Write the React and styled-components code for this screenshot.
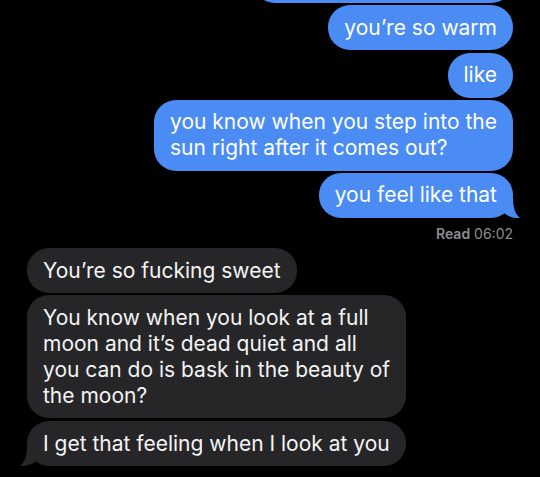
import React from "react";
import styled, { createGlobalStyle } from "styled-components";

const GlobalStyle = createGlobalStyle`
  html, body {
    margin: 0;
    padding: 0;
    background: #000;
  }
  body {
    font-family: Inter, "Liberation Sans", sans-serif;
    overflow: hidden;
  }
`;

const Thread = styled.div`
  width: 540px;
  height: 477px;
  box-sizing: border-box;
  padding: 0 27px;
  display: flex;
  flex-direction: column;
  overflow: hidden;
`;

const Row = styled.div`
  display: flex;
  justify-content: ${(props) => (props.$mine ? "flex-end" : "flex-start")};
  margin-top: ${(props) => props.$gap ?? 2.5}px;
`;

const Bubble = styled.div`
  position: relative;
  box-sizing: border-box;
  padding: 9.5px 16px;
  border-radius: 22px;
  font-size: 21px;
  line-height: 26px;
  white-space: nowrap;
  color: ${(props) => (props.$mine ? "#fff" : "#f4f4f4")};
  background: ${(props) => (props.$mine ? "#4a8cf3" : "#262628")};
`;

// the bubble above, scrolled almost out of view
const Stub = styled.div`
  width: ${(props) => props.$width}px;
  height: 45px;
  border-radius: 22px;
  background: #4a8cf3;
`;

const Tail = styled.svg`
  position: absolute;
  bottom: 0;
  width: 17px;
  height: 20px;
  ${(props) => (props.$mine ? "right: -7px;" : "left: -7px; transform: scaleX(-1);")}
`;

const Receipt = styled.div`
  margin-top: 7px;
  height: 21px;
  text-align: right;
  font-size: 14px;
  line-height: 18px;
  color: #8d8d92;
`;

const ReadLabel = styled.span`
  font-weight: 600;
`;

const Message = ({ mine, tail, gap, children }) => (
  <Row $mine={mine} $gap={gap}>
    <Bubble $mine={mine}>
      {children}
      {tail && (
        <Tail $mine={mine} viewBox="0 0 17 20">
          <path
            d="M0 0 H10 C10 10 12.5 16.5 17 20 C12 20.6 6 19 1.5 15.5 Z"
            fill={mine ? "#4a8cf3" : "#262628"}
          />
        </Tail>
      )}
    </Bubble>
  </Row>
);

export default function App() {
  return (
    <>
      <GlobalStyle />
      <Thread>
        <Row $mine $gap={-42}>
          <Stub $width={260} />
        </Row>
        <Message mine gap={2}>you’re so warm</Message>
        <Message mine>like</Message>
        <Message mine gap={2}>
          you know when you step into the
          <br />
          sun right after it comes out?
        </Message>
        <Message mine gap={2} tail>
          you feel like that
        </Message>
        <Receipt>
          <ReadLabel>Read</ReadLabel> 06:02
        </Receipt>
        <Message>You’re so fucking sweet</Message>
        <Message gap={2}>
          You know when you look at a full
          <br />
          moon and it’s dead quiet and all
          <br />
          you can do is bask in the beauty of
          <br />
          the moon?
        </Message>
        <Message gap={3} tail>
          I get that feeling when I look at you
        </Message>
      </Thread>
    </>
  );
}
